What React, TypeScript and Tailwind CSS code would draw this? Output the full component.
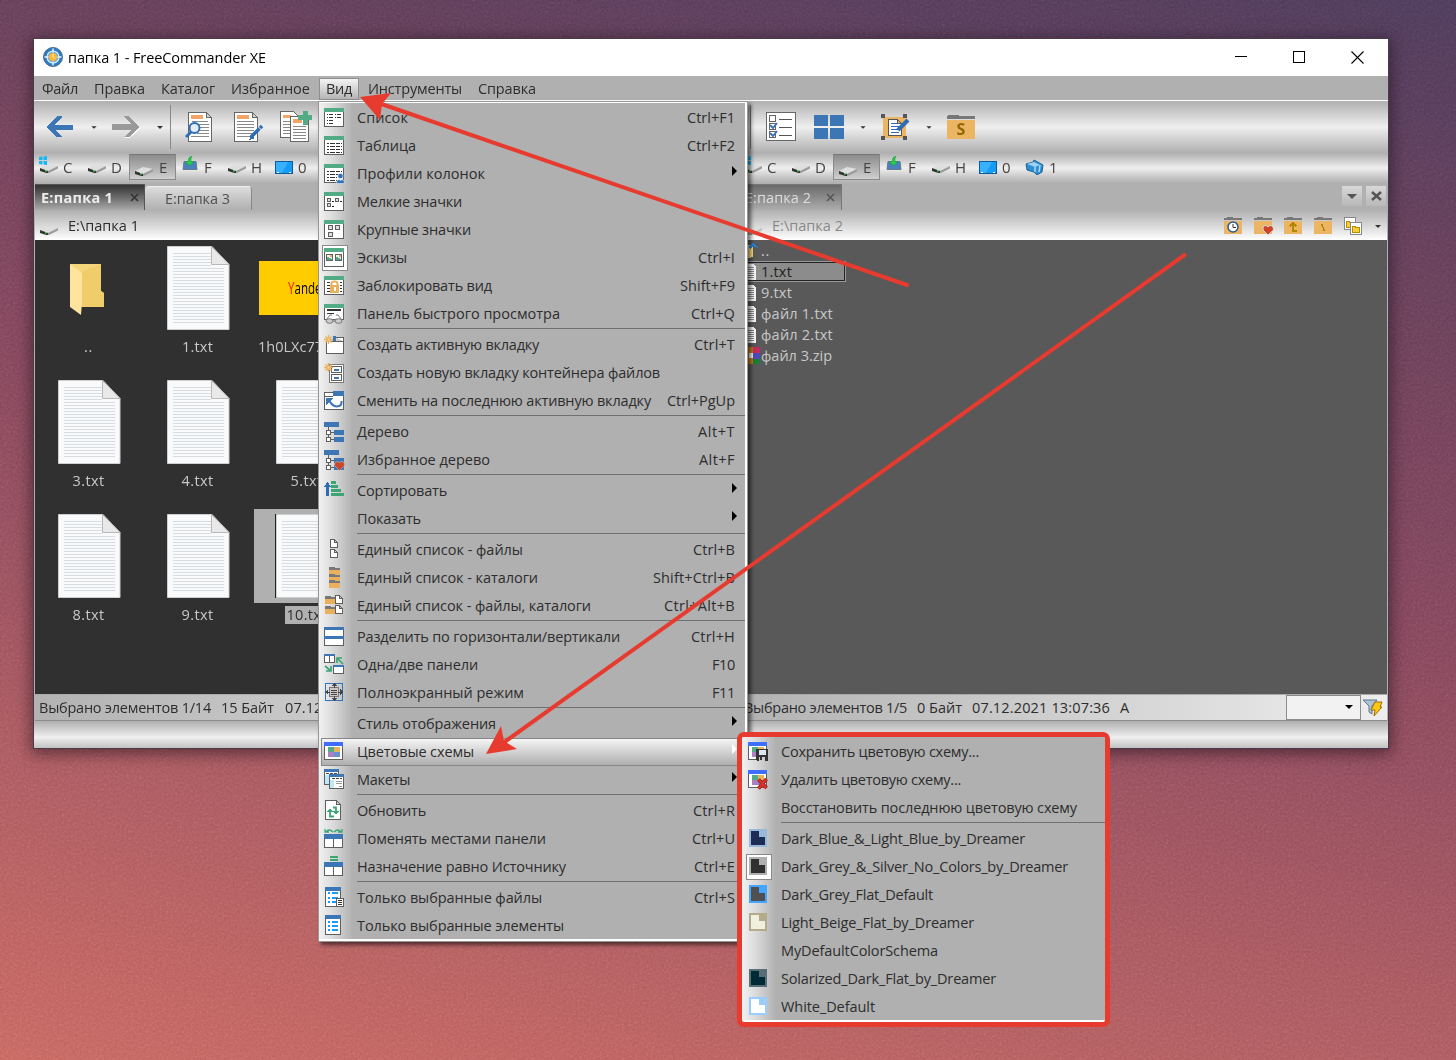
import { useLayoutEffect, useRef, type ReactNode } from 'react'

/* Text spread over a fixed width through letter spacing. */
function Label({ text, w, className = '' }: { text: string; w: number; className?: string }) {
  const ref = useRef<HTMLSpanElement>(null)
  useLayoutEffect(() => {
    const el = ref.current
    if (!el) return
    el.style.letterSpacing = '0px'
    const natural = el.getBoundingClientRect().width
    el.style.letterSpacing = (w - natural) / text.length + 'px'
  }, [text, w])
  return (
    <span ref={ref} className={'inline-block shrink-0 whitespace-pre ' + className}>
      {text}
    </span>
  )
}

function Ico({ w = 20, h = 20, children, className = '', smooth = false }: { w?: number; h?: number; children: ReactNode; className?: string; smooth?: boolean }) {
  return (
    <svg width={w} height={h} viewBox={`0 0 ${w} ${h}`} fill="none" shapeRendering={smooth ? 'auto' : 'crispEdges'} className={'block shrink-0 ' + className}>
      {children}
    </svg>
  )
}

const G = '#52ab85'
const B = '#3c76b5'
const D = '#5f5f5f'
const O = '#e9b15b'

function Frame({ color = G }: { color?: string }) {
  return (
    <>
      <rect x=".5" y=".5" width="19" height="18" fill="#fff" stroke={D} />
      <rect width="20" height="4" fill={color} />
    </>
  )
}

const Lines = ({ x, w, ys, c = '#333' }: { x: number; w: number; ys: number[]; c?: string }) => (
  <>{ys.map((y) => <rect key={y} x={x} y={y} width={w} height="1" fill={c} />)}</>
)

function Star() {
  return (
    <g stroke={O} strokeWidth="1.3" shapeRendering="auto">
      <path d="M4.5 0v9M0 4.5h9M1.5 1.5l6 6M7.5 1.5l-6 6" />
      <circle cx="4.5" cy="4.5" r="1" fill="#f4dfb5" stroke="none" />
    </g>
  )
}

function TreeShape() {
  return (
    <>
      <path d="M0 0h15v5H0zM10 8h10v5H10zM10 15h10v5H10z" fill={B} />
      <path d="M4.5 5v12M6 10.5h4M6 17.5h4" stroke={D} />
      <path d="M2.500 8.500h4v4h-4zM2.500 15.500h4v4h-4z" fill="#fff" stroke={D} />
    </>
  )
}

const Page = ({ x, y }: { x: number; y: number }) => (
  <path transform={`translate(${x} ${y})`} d="M.5.5h4l3 3v5h-7zM4.500.5v3h3" fill="#fff" stroke={D} />
)
const MiniFolder = ({ x, y, w = 10 }: { x: number; y: number; w?: number }) => (
  <g transform={`translate(${x} ${y})`}>
    <path d={`M0 0h5l1 1h${w - 6}v2H0z`} fill="#777" />
    <rect y="3" width={w} height="5" fill={O} />
  </g>
)

function Scheme() {
  return (
    <>
      <rect x=".5" y=".5" width="18" height="17" fill="#fff" stroke={D} />
      <rect width="19" height="4" fill="#3e6dff" />
      <rect x="4" y="5" width="6" height="5" fill="#52ab85" />
      <rect x="10" y="5" width="6" height="5" fill={O} />
      <rect x="4" y="10" width="6" height="5" fill="#ad7fc3" />
      <rect x="10" y="10" width="6" height="5" fill="#6991d1" />
    </>
  )
}

const Panels = () => (
  <>
    <path d="M.5 5.500h18v13H.5zM9.500 9v10" fill="#fff" stroke={D} />
    <rect y="5" width="19" height="5" fill={B} />
  </>
)

const icons: Record<string, ReactNode> = {
  list: (
    <>
      <Frame />
      <path d="M3.500 6v11M11.500 6v5" stroke="#333" strokeDasharray="1 2" />
      <path d="M5 6.500h4M5 9.500h4M5 12.500h4M5 15.500h4M13 6.500h4M13 9.500h4" stroke="#333" />
    </>
  ),
  table: (
    <>
      <Frame />
      <path d="M3 7.500h15M3 10.500h15M3 13.500h15M3 16.500h15" stroke="#333" strokeDasharray="2 1 5 1 4 1 2 5" />
    </>
  ),
  profiles: (
    <>
      <Frame />
      <path d="M3 7.500h15M3 10.500h12M3 13.500h10M3 16.500h10" stroke="#333" strokeDasharray="2 1 5 1 4 1 2 5" />
      <g shapeRendering="auto" fill="#2f70b8" stroke="#fff" strokeWidth=".5">
        <circle cx="16.500" cy="12" r="2.600" />
        <path d="M12.500 19.500q0-4 2.500-4l1.500 1 1.500-1q2.500 0 2.500 4z" />
      </g>
    </>
  ),
  small: (
    <>
      <Frame />
      <path d="M3.500 6.500h3v3h-3zM11.500 6.500h3v3h-3zM3.500 11.500h3v3h-3z" fill="#ddd" stroke={D} />
      <path d="M8 9.500h2M16 9.500h2M8 14.500h2" stroke="#222" />
    </>
  ),
  large: (
    <>
      <Frame />
      <path d="M4.500 5.500h4v4h-4zM11.500 5.500h4v4h-4zM4.500 12.500h4v4h-4z" fill="#ddd" stroke={D} />
    </>
  ),
  thumbs: (
    <>
      <Frame />
      <path d="M2.500 6.500h6v6h-6zM11.500 6.500h6v6h-6z" fill="#eef1ee" stroke={D} />
      <path d="M3 12V9l3 1 2 2zM12 12V9l3 1 2 2z" fill={G} />
      <path d="M6 7h2v2H6zM15 7h2v2h-2z" fill={O} />
    </>
  ),
  lock: (
    <>
      <Frame />
      <path d="M3 6.500h3M3 9.500h3M3 12.500h3M3 15.500h3M16 6.500h2M16 9.500h2M16 12.500h2M16 15.500h2" stroke="#333" />
      <path d="M7.500 10V7.500q0-2 3-2t3 2V10" stroke={O} strokeWidth="2" shapeRendering="auto" />
      <rect x="6" y="9" width="9" height="8" fill={O} />
      <path d="M10.500 11v4" stroke="#fff" strokeWidth="2" />
    </>
  ),
  preview: (
    <>
      <rect x=".5" y=".5" width="19" height="15" fill="#fff" stroke={D} />
      <rect width="20" height="4" fill={G} />
      <path d="M3 5.500h14M3 6.500h14M3 9.500h7" stroke="#333" />
      <g shapeRendering="auto" stroke="#777">
        <path d="M2 16L6 11h2M18 16l-4-5h-2M9 17h2" />
        <ellipse cx="5.500" cy="17" rx="3.500" ry="2.300" fill="#ccc" />
        <ellipse cx="14.500" cy="17" rx="3.500" ry="2.300" fill="#ccc" />
      </g>
    </>
  ),
  newtab: (
    <>
      <path d="M2.500 6.500h17v12h-17zM11.500 2.500h8v4" fill="#fff" stroke={D} />
      <rect x="9" y="1" width="3" height="5" fill={B} />
      <Star />
    </>
  ),
  newcontainer: (
    <>
      <rect x="5.500" y="1.500" width="14" height="18" fill="#fff" stroke="#777" />
      <path d="M7.500 3.500h10v6h-10zM7.500 11.500h10v6h-10z" stroke={D} />
      <path d="M10 7h5M10 15h5" stroke={B} strokeWidth="2" />
      <Star />
    </>
  ),
  lasttab: (
    <>
      <rect x=".5" y="1.500" width="19" height="17" fill="#fff" stroke={D} />
      <rect x="9" width="11" height="5" fill={B} />
      <path d="M0 5.500h9" stroke={D} />
      <path d="M5 9q4 8 10 6 3-1 2.500-5" stroke={B} strokeWidth="2" shapeRendering="auto" />
      <path d="M2 7h8L2 14z" fill={B} />
    </>
  ),
  tree: <TreeShape />,
  favtree: (
    <>
      <TreeShape />
      <path d="M15.500 20.500l-5-5q-.5-3.500 2.500-4 2 0 2.500 1.500.5-1.500 2.500-1.500 3 .5 2.500 4z" fill="#cb4629" stroke="#bbb" strokeWidth=".6" shapeRendering="auto" />
    </>
  ),
  sort: (
    <>
      <path d="M3.500 1L7 6H5v9H2V6H0z" fill="#2e6db4" />
      <path d="M7 0h5v3H7zM7 4h7v3H7zM7 8h10v3H7zM7 12h13v3H7z" fill="#3aa674" />
    </>
  ),
  files: (
    <>
      <Page x={6} y={-1} />
      <Page x={6} y={9} />
    </>
  ),
  dirs: (
    <>
      <MiniFolder x={5} y={-1} w={11} />
      <MiniFolder x={5} y={6} w={11} />
      <MiniFolder x={5} y={12} w={11} />
    </>
  ),
  both: (
    <>
      <MiniFolder x={1} y={0} />
      <MiniFolder x={1} y={10} />
      <Page x={11} y={-1} />
      <Page x={11} y={9} />
    </>
  ),
  split: (
    <>
      <rect x=".5" y=".5" width="19" height="18" fill="#fff" stroke={D} />
      <path d="M0 0h20v3H0zM0 9h20v3H0z" fill={B} />
    </>
  ),
  onetwo: (
    <>
      <path d="M.5-.5h10v8H.5zM5.500 0v8M9.500 11.500h10v7h-10z" fill="#fff" stroke={D} />
      <path d="M0-1h11v2H0zM9 10h11v2H9z" fill={B} />
      <path d="M19 9l-6-6m0 5V3h5M1 11l6 5m0-5v5H2" stroke="#3aa674" strokeWidth="1.700" shapeRendering="auto" />
    </>
  ),
  full: (
    <>
      <rect x="1.500" y=".5" width="17" height="17" stroke="#3572b8" />
      <path d="M5.500 4.500h9v9h-9z" fill="#c9c9c9" stroke="#777" />
      <path d="M7 7.500h6M7 9.500h6M7 11.500h6M10 0v5M10 13v5M1 9h5M14 9h5" stroke="#444" />
      <path d="M7 3h6l-3-3zM7 15h6l-3 3zM4 6v6L1 9zM16 6v6l3-3z" fill="#444" />
    </>
  ),
  scheme: <Scheme />,
  layouts: (
    <>
      <rect x=".5" y=".5" width="14" height="14" fill="#fff" stroke={D} />
      <path d="M1 5h4v9H1z" fill="#bfe6fb" />
      <path d="M5.500 5.500h14v13h-14z" fill="#fff" stroke={D} />
      <path d="M0-1h15v3H0zM5 4h15v3H5z" fill={B} />
      <path d="M6 10h4v8H6z" fill="#bfe6fb" />
      <path d="M2 3.500h11M8 8.500h10" stroke="#444" strokeDasharray="3 1" />
      <path d="M12 11.500h6M12 13.500h6M15 16h3" stroke="#999" />
    </>
  ),
  refresh: (
    <>
      <path d="M1.500-.5h11l4 4v15h-15zM12.500-.5v4h4" fill="#fff" stroke={D} />
      <path d="M6 11v4.500h4M9 6.500h3V11" stroke="#3aa674" strokeWidth="1.800" shapeRendering="auto" />
      <path d="M3 11l3-3.500 3 3.500zM9 10h6l-3 3.500z" fill="#3aa674" />
    </>
  ),
  swap: (
    <>
      <Panels />
      <path d="M1 0v3h4M2 3q3-4 7 0M18 0v3h-4M17 3q-3-4-7 0" stroke="#3aa674" strokeWidth="1.300" shapeRendering="auto" />
    </>
  ),
  equal: (
    <>
      <Panels />
      <path d="M6-1h8v2H6zM6 2h8v2H6z" fill="#3aa674" />
    </>
  ),
  selfiles: (
    <>
      <path d="M1.500.5h15v18h-15z" fill="#fff" stroke={D} />
      <path d="M1-1h16v4H1z" fill={B} />
      <path d="M4 5h2M8 5h6M4 9.500h2M8 9.500h6M4 14h2M8 14h6" stroke="#189bff" strokeWidth="2" />
      <path d="M12.500 10.500h7v8h-7z" fill="#fff" stroke={D} />
      <path d="M14 12.500h4M14 14.500h4M14 16.500h4" stroke="#333" />
    </>
  ),
  selitems: (
    <>
      <path d="M1.500.5h15v18h-15z" fill="#fff" stroke={D} />
      <path d="M1-1h16v4H1z" fill={B} />
      <path d="M4 6h2M8 6h6M4 10h2M8 10h6M4 14h2M8 14h6" stroke="#189bff" strokeWidth="2" />
    </>
  ),
  save: (
    <>
      <Scheme />
      <path d="M8 7h12v12H9l-1-1z" fill="#333" />
      <path d="M11 8h7v5h-7z" fill="#dfe8ee" />
      <path d="M11 15h6v4h-6z" fill="#ccc" />
      <path d="M12 15h2v3h-2z" fill="#333" />
    </>
  ),
  del: (
    <>
      <Scheme />
      <path d="M10.500 9.500l8 8.500M18.500 9l-8 9.500" stroke="#8e1a14" strokeWidth="3.600" shapeRendering="auto" />
      <path d="M10.500 9.500l8 8.500M18.500 9l-8 9.500" stroke="#e02f25" strokeWidth="2.400" shapeRendering="auto" />
    </>
  ),
}

function Swatch({ outer, inner }: { outer: string; inner: string }) {
  return (
    <>
      <rect x="1" width="18" height="18" fill={outer} />
      <path d="M3 2h8v6h6v8H3z" fill={inner} />
    </>
  )
}

type Item = [icon: ReactNode, text: string, w: number, key?: string, kw?: number]
const SEP = null
const ARROW = '>'

const menu: (Item | null)[] = [
  [icons.list, 'Список', 51, 'Ctrl+F1', 48],
  [icons.table, 'Таблица', 59, 'Ctrl+F2', 48],
  [icons.profiles, 'Профили колонок', 128, ARROW],
  [icons.small, 'Мелкие значки', 105],
  [icons.large, 'Крупные значки', 114],
  [icons.thumbs, 'Эскизы', 50, 'Ctrl+I', 37],
  [icons.lock, 'Заблокировать вид', 135, 'Shift+F9', 55],
  [icons.preview, 'Панель быстрого просмотра', 203, 'Ctrl+Q', 44],
  SEP,
  [icons.newtab, 'Создать активную вкладку', 182, 'Ctrl+T', 41],
  [icons.newcontainer, 'Создать новую вкладку контейнера файлов', 303],
  [icons.lasttab, 'Сменить на последнюю активную вкладку', 294, 'Ctrl+PgUp', 68],
  SEP,
  [icons.tree, 'Дерево', 52, 'Alt+T', 37],
  [icons.favtree, 'Избранное дерево', 133, 'Alt+F', 36],
  SEP,
  [icons.sort, 'Сортировать', 90, ARROW],
  [null, 'Показать', 64, ARROW],
  SEP,
  [icons.files, 'Единый список - файлы', 166, 'Ctrl+B', 42],
  [icons.dirs, 'Единый список - каталоги', 181, 'Shift+Ctrl+B', 82],
  [icons.both, 'Единый список - файлы, каталоги', 234, 'Ctrl+Alt+B', 71],
  SEP,
  [icons.split, 'Разделить по горизонтали/вертикали', 263, 'Ctrl+H', 44],
  [icons.onetwo, 'Одна/две панели', 121, 'F10', 23],
  [icons.full, 'Полноэкранный режим', 167, 'F11', 23],
  SEP,
  [null, 'Стиль отображения', 139, ARROW],
  [icons.scheme, 'Цветовые схемы', 117, ARROW],
  [icons.layouts, 'Макеты', 53, ARROW],
  SEP,
  [icons.refresh, 'Обновить', 69, 'Ctrl+R', 42],
  [icons.swap, 'Поменять местами панели', 189, 'Ctrl+U', 43],
  [icons.equal, 'Назначение равно Источнику', 209, 'Ctrl+E', 41],
  SEP,
  [icons.selfiles, 'Только выбранные файлы', 185, 'Ctrl+S', 41],
  [icons.selitems, 'Только выбранные элементы', 207],
]

const submenu: (Item | null)[] = [
  [icons.save, 'Сохранить цветовую схему...', 198],
  [icons.del, 'Удалить цветовую схему...', 180],
  [null, 'Восстановить последнюю цветовую схему', 296],
  SEP,
  [<Swatch outer="#9ab8d9" inner="#1d2c56" />, 'Dark_Blue_&_Light_Blue_by_Dreamer', 244],
  [<Swatch outer="#b0b0b0" inner="#303030" />, 'Dark_Grey_&_Silver_No_Colors_by_Dreamer', 287],
  [<Swatch outer="#43a5ff" inner="#505050" />, 'Dark_Grey_Flat_Default', 152],
  [<Swatch outer="#b3ab8b" inner="#f0f0dc" />, 'Light_Beige_Flat_by_Dreamer', 193],
  [null, 'MyDefaultColorSchema', 157],
  [<Swatch outer="#586e75" inner="#002b36" />, 'Solarized_Dark_Flat_by_Dreamer', 215],
  [<Swatch outer="#99ccff" inner="#ffffff" />, 'White_Default', 94],
]

function MenuRows({ items, checked, active }: { items: (Item | null)[]; checked: string; active?: string }) {
  return (
    <>
      {items.map((it, i) => {
        if (!it) return <div key={i} className="ml-[36px] h-[3px] border-t border-[#707070]" />
        const [icon, text, w, key, kw] = it
        const on = text === active
        return (
          <div key={i} className={'flex h-7 items-center ' + (on ? 'bg-linear-to-b from-[#f8f8f8] to-[#acacac] outline outline-offset-[-1px] outline-[#878787]' : '')}>
            <span className={'ml-px flex size-[26px] shrink-0 items-center justify-center ' + (text === checked ? 'border border-[#8a8a8a] bg-white' : '')}>
              <Ico className="mr-0.5 overflow-visible">{icon}</Ico>
            </span>
            <Label text={text} w={w} className="ml-[9px]" />
            {key === ARROW ? (
              <span className={'mr-2 -mt-1.5 ml-auto h-0 w-0 border-y-[5px] border-l-[5px] border-y-transparent ' + (on ? 'border-l-white' : 'border-l-black')} />
            ) : key ? (
              <Label text={key} w={kw ?? 40} className="mr-2.5 ml-auto" />
            ) : null}
          </div>
        )
      })}
    </>
  )
}

const Drive = ({ faded = false, win = false }: { faded?: boolean; win?: boolean }) => (
  <Ico w={20} h={17} smooth className={faded ? 'opacity-50' : ''}>
    <path d="M1 12l8-4 10 2-10 5z" fill="#dedede" />
    <path d="M1 12l8 3v2.500l-8-2.500z" fill="#333" />
    <path d="M9 15l10-5v2.500L9 17.500z" fill="#9c9c9c" />
    <rect x="6" y="14" width="2" height="1.500" fill="#46d651" />
    {win && <path d="M0 1l3.500-.5V4H0zM4.500 .4L8 0v4H4.500zM0 5h3.500v3.500L0 8zM4.500 5H8v4l-3.500-.4z" fill="#18b6f5" />}
  </Ico>
)

const UsbDrive = () => (
  <Ico w={16} h={16} smooth>
    <path d="M2 5.500h12l1 8H1z" fill="#4c7fc0" stroke="#6c7787" />
    <path d="M10 0Q6 1 6 5.500H3.500l4 4.500L12 5.500H9Q8.500 2 10 0z" fill="#28cc4a" stroke="#17983a" strokeWidth=".5" />
  </Ico>
)

const Monitor = () => (
  <Ico w={18} h={13}>
    <rect x=".5" y=".5" width="17" height="12" fill="#179cf5" stroke="#0a5aa0" />
    <path d="M1 1h12L7 12H1z" fill="#37b0ff" />
    <path d="M2 11.500h2M14 11.500h2" stroke="#fff" />
  </Ico>
)

function Drives({ extra = false }: { extra?: boolean }) {
  return (
    <div className="flex h-full items-center pb-0.5 text-[15px] text-[#46423e]">
      <span className="flex w-[47px] gap-1 pl-[3px]"><Drive win /><Label text="C" w={10} /></span>
      <span className="flex w-[46px] gap-1 pl-1"><Drive /><Label text="D" w={11} /></span>
      <span className="flex h-[26px] w-[47px] items-center gap-[5px] border border-[#8a8a8a] border-t-[#777] bg-linear-to-b from-[#8c8c8c] to-[#d0d0d0] pl-1"><Drive /><Label text="E" w={9} /></span>
      <span className="flex w-[48px] gap-1.5 pl-1.5"><UsbDrive /><Label text="F" w={8} /></span>
      <span className="flex w-[50px] gap-1 pl-[3px]"><Drive /><Label text="H" w={11} /></span>
      <span className="flex w-[47px] items-center gap-[5px] pl-px"><Monitor /><Label text="0" w={9} /></span>
      {extra && (
        <span className="flex items-center gap-1">
          <Ico w={20} h={16} smooth>
            <path d="M1 5l7-2 1-2 9 5-1 7-5 3-3-3-7-2z" fill="#2f8ed0" stroke="#1c6498" />
            <path d="M2 5l7-2 6 3-5 2z" fill="#9bd3f4" />
            <path d="M10 8v5M15 6l-1 7" stroke="#a8dcf8" strokeWidth="1.500" />
          </Ico>
          <Label text="1" w={8} />
        </span>
      )}
    </div>
  )
}

const TextPage = () => (
  <svg width="63" height="84" viewBox="0 0 63 84" className="ml-0.5 block">
    <path d="M.5.5H45l17 18v65H.5z" fill="#f9fafb" stroke="#cfcfcf" />
    {Array.from({ length: 24 }, (_, i) => (
      <path key={i} d={`M6 ${7.5 + i * 3}h${i < 5 ? 38 : 51}`} stroke="#d9dcde" shapeRendering="crispEdges" />
    ))}
    <path d="M44.500.5l17.500 18H44.500z" fill="#e9e9ea" stroke="#b9b9b9" />
  </svg>
)

function Thumb({ name, w, children, selected = false }: { name: string; w: number; children: ReactNode; selected?: boolean }) {
  return (
    <div className="flex h-[134px] w-[109px] shrink-0 flex-col items-center">
      <div className={'flex h-[94px] w-[105px] items-center justify-center ' + (selected ? 'bg-[#b0b0b0]' : '')}>{children}</div>
      <span className={'mt-[3px] flex h-[18px] items-center px-0.5 ' + (selected ? 'bg-[#b0b0b0] text-[#303030]' : '')}>
        <Label text={name} w={w} />
      </span>
    </div>
  )
}

const Caret = ({ className = '' }: { className?: string }) => (
  <span className={'block h-0 w-0 shrink-0 border-x-[3px] border-t-[3px] border-x-transparent border-t-[#333] ' + className} />
)

const Folder = ({ children }: { children?: ReactNode }) => (
  <Ico w={20} h={18}>
    <path d="M0 3V1h2l1-1h5l1 1h9v2z" fill="#777" />
    <rect y="4" width="18" height="13" fill="#ebb564" />
    {children}
  </Ico>
)

const Bar = 'bg-linear-to-b from-[#b0b0b0] via-[#efefef] to-[#b0b0b0]'

export default function App() {
  return (
    <div className="relative h-[1060px] w-[1456px] overflow-hidden bg-[linear-gradient(191deg,#4b3a58_0%,#643e56_22%,#7f4559_48%,#a9585d_78%,#c6645e_100%)] font-['Open_Sans','Noto_Sans',sans-serif] text-[14.500px] text-[#2d2d2d]">
      <svg className="absolute inset-0 h-full w-full opacity-40 mix-blend-overlay">
        <filter id="grain">
          <feTurbulence type="fractalNoise" baseFrequency=".45" numOctaves="2" />
          <feColorMatrix type="saturate" values="0" />
        </filter>
        <rect width="1456" height="1060" filter="url(#grain)" />
      </svg>

      <main className="relative mt-[39px] ml-[34px] flex h-[709px] w-[1354px] flex-col bg-[#b0b0b0] shadow-[0_3px_14px_3px_rgba(20,8,20,.5)] outline outline-[#4b3a48]">
        <header className="flex h-[37px] shrink-0 items-center bg-white pr-[25px] pb-px pl-[9px] text-black">
          <Ico w={20} h={20} smooth>
            <circle cx="10" cy="10" r="9.500" fill="#2c7cc7" stroke="#4a6c8b" />
            <circle cx="10" cy="10" r="6" fill="#6eaada" stroke="#d9edf9" strokeWidth="1.200" />
            <path d="M10 1.500v4M10 14.500v4M1.500 10h4M14.500 10h4" stroke="#e7f5ff" strokeWidth="1.500" />
            <circle cx="10" cy="10" r="4" fill="#ffb633" />
            <path d="M10 7v3l2 1.500" stroke="#fff2c5" />
          </Ico>
          <Label text="папка 1 - FreeCommander XE" w={198} className="ml-[5px] pt-px" />
          <div className="ml-auto flex items-center gap-[46px]">
            <Ico w={12} h={12}><path d="M0 5.500h12" stroke="#000" /></Ico>
            <Ico w={12} h={12}><path d="M.5.5h11v11H.5z" stroke="#000" /></Ico>
            <Ico w={13} h={13} smooth className="-mr-px"><path d="M.5.5l12 12M12.500.5l-12 12" stroke="#000" strokeWidth="1.100" /></Ico>
          </div>
        </header>

        <nav className="flex h-[25px] shrink-0 items-center gap-4 border-b border-white pt-0.5 pl-2">
          <Label text="Файл" w={36} />
          <Label text="Правка" w={51} />
          <Label text="Каталог" w={54} />
          <Label text="Избранное" w={79} />
          <span className="-mx-[7px] flex h-[22px] items-center border border-[#8f8f8f] bg-linear-to-b from-[#f4f4f4] to-[#b4b4b4] px-1.5">
            <Label text="Вид" w={26} />
          </span>
          <Label text="Инструменты" w={94} />
          <Label text="Справка" w={58} />
        </nav>

        <div className={'flex h-[52px] shrink-0 items-center ' + Bar}>
          <Ico w={28} h={22} className="ml-3"><path d="M0 11L11 0h5v1L9 9h18v5H9l7 6v1h-5z" fill={B} /></Ico>
          <Caret className="ml-[17px] scale-90" />
          <Ico w={28} h={22} className="ml-[15px]"><path d="M28 12L18 21h-5" stroke="#fff" /><path d="M27 11L17 0h-5v1l7 7H0v6h19l-7 7h5z" fill="#999" /></Ico>
          <Caret className="ml-[17px]" />
          <span className="ml-[7px] h-11 w-px bg-[#888]" />
          <Ico w={28} h={32} className="ml-[14px]">
            <path d="M3.500 1.500h18l5 5v24h-23zM21.500 1.500v5h5" fill="#fff" stroke="#666" />
            <rect x="6" y="4" width="12" height="4" fill="#f3a468" />
            <path d="M7 10.500h16M14 13.500h10M15 16.500h9M14 19.500h10M12 22.500h12M6 25.500h18" stroke="#888" />
            <g shapeRendering="auto" stroke="#2e6db4"><circle cx="9.500" cy="17" r="5" fill="#e5eef7" strokeWidth="2" /><path d="M6 21l-5 5" strokeWidth="3" /></g>
          </Ico>
          <Ico w={30} h={32} className="ml-[21px]">
            <path d="M.5 1.500h18l5 5v24H.5zM18.500 1.500v5h5" fill="#fff" stroke="#666" />
            <rect x="3" y="4" width="12" height="4" fill="#f3a468" />
            <Lines x={3} w={17} ys={[10, 13, 16, 19, 22, 25]} c="#888" />
            <path d="M15 29l2-5 4 3z" fill="#2e6db4" />
            <path d="M17 26l11-11" stroke="#2e6db4" strokeWidth="3.500" shapeRendering="auto" />
            <path d="M24.500 16l3 3" stroke="#fff" shapeRendering="auto" />
          </Ico>
          <Ico w={33} h={32} className="ml-4">
            <path d="M.5.5h13l5 5v21H.5z" fill="#fff" stroke="#666" />
            <rect x="3" y="4" width="8" height="3" fill="#f3a468" />
            <Lines x={3} w={7} ys={[10, 13, 16, 19, 22]} c="#888" />
            <path d="M10.500 5.500h18v25h-18z" fill="#fff" stroke="#666" />
            <rect x="13" y="8" width="9" height="4" fill="#f3a468" />
            <Lines x={13} w={13} ys={[15, 18, 21, 24, 27]} c="#888" />
            <path d="M25-.5v14M18 6.500h14" stroke={G} strokeWidth="5" />
          </Ico>

          <span className="ml-[437px] h-11 w-px bg-[#777]" />
          <Ico w={31} h={30} className="ml-[15px]">
            <rect x=".5" y=".5" width="29" height="28" fill="#fff" stroke="#666" />
            <path d="M3.500 3.500h6v6h-6zM3.500 11.500h6v6h-6zM3.500 19.500h6v6h-6z" stroke="#666" />
            <path d="M13 7.500h13M13 15.500h13M13 23.500h13" stroke="#555" />
            <path d="M4 13l3 3 4-5M4 21l3 3 4-5" stroke={B} strokeWidth="2" shapeRendering="auto" />
          </Ico>
          <Ico w={30} h={24} className="ml-[17px]"><path d="M0 0h14v11H0zM16 0h14v11H16zM0 13h14v11H0zM16 13h14v11H16z" fill={B} /></Ico>
          <Caret className="ml-4 scale-90" />
          <Ico w={30} h={27} className="ml-[15px]">
            <rect x="2" y="3" width="23" height="21" fill="#ebb564" />
            <path d="M7.500 5.500h9l4 4v12h-13zM16.500 5.500v4h4" fill="#fff" stroke="#555" />
            <Lines x={10} w={8} ys={[9, 12, 15, 18]} c="#2e6db4" />
            <path d="M0 0h4v4H0zM22 0h4v4h-4zM0 22h4v4H0zM22 22h4v4h-4z" fill="#555" />
            <path d="M17 16l10-10" stroke="#2e6db4" strokeWidth="4" shapeRendering="auto" />
          </Ico>
          <Caret className="ml-[15px] scale-90" />
          <div className="relative ml-[15px]">
            <Ico w={28} h={24}>
              <path d="M0 4V1l2-1h9l2 1h15v3z" fill="#777" /><rect y="5" width="28" height="19" fill="#ebb564" />
            </Ico>
            <span className="absolute inset-x-0 top-[5px] text-center text-[16px]/[19px] font-bold text-[#8f6900]">S</span>
          </div>
        </div>

        <div className={'flex h-[30px] shrink-0 ' + Bar}>
          <div className="w-[706px] pl-0.5"><Drives /></div>
          <Drives extra />
        </div>

        <div className="flex min-h-0 flex-1 px-px">
          <section className="flex w-[704px] shrink-0 flex-col">
            <div className="flex h-[27px] shrink-0 items-end">
              <div className="flex h-[26px] w-[110px] items-center border-t border-r border-[#555] bg-linear-to-b from-[#343434] to-[#aaa] pl-1.5 font-bold text-[#ececec]">
                <Label text="E:папка 1" w={72} />
                <Ico w={9} h={9} smooth className="ml-[17px]"><path d="M1 1l7 7M8 1L1 8" stroke="#333" strokeWidth="1.600" /></Ico>
              </div>
              <div className="flex h-[24px] w-[107px] items-center rounded-t-sm border-t border-r border-t-[#eee] border-r-[#888] bg-linear-to-b from-[#dcdcdc] to-[#b0b0b0] pl-[20px] text-[#505050]">
                <Label text="E:папка 3" w={65} />
              </div>
            </div>
            <div className="flex h-[30px] shrink-0 items-center bg-linear-to-b from-[#b0b0b0] to-white pt-0.5 pl-1">
              <Drive /><Label text="E:\папка 1" w={71} className="ml-[9px]" />
            </div>
            <div className="h-[454px] shrink-0 overflow-hidden bg-[#303030] text-[#c8c8c8]">
              <div className="-ml-px">
                <div className="flex pt-px">
                  <Thumb name=".." w={9}>
                    <svg width="36" height="53" viewBox="0 0 36 53" className="mt-[3px] mr-0.5 block">
                      <path d="M0 1h31v27l3 2v14H10z" fill="#f5d57c" /><path d="M11 9L31 1v27l3 2v14H11z" fill="#f0cd6b" />
                      <path d="M0 1l12 9v29l-1 13L0 44z" fill="#ffe49d" />
                    </svg>
                  </Thumb>
                  <Thumb name="1.txt" w={31}><TextPage /></Thumb>
                  <div className="flex h-[134px] w-[109px] flex-col pl-[7px]">
                    <div className="mt-5 flex h-[54px] w-[100px] items-center bg-[#ffcc00] pl-[29px] text-[17px] font-medium text-black">
                      <span className="inline-block origin-left scale-x-[.68] first-letter:text-[#f02010]">Yandex</span>
                    </div>
                    <Label text="1h0LXc77" w={65} className="mt-[22px] -ml-px self-start leading-5" />
                  </div>
                </div>
                <div className="flex">
                  <Thumb name="3.txt" w={32}><TextPage /></Thumb>
                  <Thumb name="4.txt" w={32}><TextPage /></Thumb>
                  <Thumb name="5.txt" w={32}><TextPage /></Thumb>
                </div>
                <div className="flex">
                  <Thumb name="8.txt" w={32}><TextPage /></Thumb>
                  <Thumb name="9.txt" w={32}><TextPage /></Thumb>
                  <Thumb name="10.txt" w={40} selected><span className="-mr-px border-l border-[#222] bg-[#222] [&>svg]:ml-0"><TextPage /></span></Thumb>
                </div>
              </div>
            </div>
            <div className="flex h-[27px] shrink-0 items-center gap-2.5 border-y border-t-[#aaa] border-b-[#8c8c8c] bg-linear-to-r from-[#b2b2b2] to-[#eee] pl-1">
              <Label text="Выбрано элементов 1/14" w={172} />
              <Label text="15 Байт" w={53} />
              <Label text="07.12.2021" w={75} className="ml-px" />
            </div>
          </section>

          <section className="flex min-w-0 flex-1 flex-col">
            <div className="flex h-[27px] shrink-0 items-end">
              <div className="flex h-[26px] w-[103px] items-center border-t border-r border-[#777] bg-linear-to-b from-[#6a6a6a] to-[#adadad] pl-1.5 text-[#ddd]">
                <Label text="E:папка 2" w={66} />
                <Ico w={9} h={9} smooth className="ml-[15px]"><path d="M1 1l7 7M8 1L1 8" stroke="#555" strokeWidth="1.500" /></Ico>
              </div>
              <div className="mr-px mb-1 ml-auto flex gap-1">
                <span className="flex size-5 items-center justify-center bg-linear-to-b from-[#d8d8d8] to-[#b8b8b8]"><span className="h-0 w-0 border-x-[5px] border-t-[5px] border-x-transparent border-t-[#555]" /></span>
                <span className="flex size-5 items-center justify-center bg-linear-to-b from-[#d8d8d8] to-[#b8b8b8]"><Ico w={11} h={10} smooth><path d="M1 1l9 8M10 1L1 9" stroke="#555" strokeWidth="2.500" /></Ico></span>
              </div>
            </div>
            <div className="flex h-[30px] shrink-0 items-center bg-linear-to-b from-[#b0b0b0] to-white pt-0.5 pr-1.5 pl-1 text-[#888]">
              <Drive faded /><Label text="E:\папка 2" w={71} className="ml-[9px]" />
              <div className="ml-auto flex items-center gap-2.5">
                <Folder><g shapeRendering="auto"><circle cx="9" cy="10" r="5" fill="#fff" stroke="#2d5a96" strokeWidth="1.500" /><path d="M9 7v3.500h3" stroke="#333" /></g></Folder>
                <Folder><path d="M14 18l-5-5q-1-4 2-4.500 2 0 3 1.500 1-1.500 3-1.500 3 .5 2.500 4.500z" fill="#cd4428" stroke="#ddd" shapeRendering="auto" /></Folder>
                <Folder><path d="M9 7v7h4M5.500 9.500L9 6l3.500 3.500" stroke="#b58500" strokeWidth="1.700" /></Folder>
                <Folder><path d="M7.500 7l3 7" stroke="#b58500" strokeWidth="1.500" /></Folder>
                <Ico w={19} h={18}>
                  <path d="M.5.5h11v12H.5z" fill="#fff" stroke="#888" />
                  <path d="M2.500 4h3v1h3v5h-6z" fill="#f3cf3a" stroke="#bb8c00" />
                  <path d="M6.500 5.500h11v12h-11z" fill="#fff" stroke="#888" />
                  <path d="M8.500 9h3v1h4v5h-7z" fill="#f3cf3a" stroke="#bb8c00" />
                </Ico>
                <Caret className="mt-px ml-0.5" />
              </div>
            </div>
            <div className="h-[454px] shrink-0 bg-[#595959] text-[#c8c8c8]">
              {[['..', 9], ['1.txt', 31], ['9.txt', 31], ['файл 1.txt', 72], ['файл 2.txt', 72], ['файл 3.zip', 71]].map(([name, w], i) => (
                <div key={name} className={'flex h-[21px] items-center pl-[3px] ' + (i === 1 ? 'w-[107px] border border-[#999] bg-[#8c8c8c] text-[#222] outline outline-offset-[-2px] outline-[#222]' : '')}>
                  <Ico w={18} h={18} className={i === 1 ? '-ml-px' : ''}>
                    {i === 0 ? (
                      <><path d="M1 3h10v12l-10 2z" fill="#ffdd7e" /><path d="M6 5l5-5 5 6-3-1-2-1-2 3z" fill="#2583db" /></>
                    ) : i === 5 ? (
                      <><path d="M1 0h17v6H1z" fill="#c12a5c" /><path d="M1 6h17v6H1z" fill="#4d4bb3" /><path d="M1 12h17v5H1z" fill="#177d37" /><path d="M5 0h6v17H5z" fill="#c27b17" /><rect x="7" y="6" width="4" height="5" fill="#eee" /></>
                    ) : (
                      <><path d="M1 1h10l3 3v13H1z" fill="#f4f4f4" /><Lines x={3} w={9} ys={[4, 6, 8, 10, 12, 14]} c="#888" /></>
                    )}
                  </Ico>
                  <Label text={String(name)} w={Number(w)} className="ml-px" />
                </div>
              ))}
            </div>
            <div className="flex h-[27px] shrink-0 items-center gap-2.5 border-y border-t-[#aaa] border-b-[#8c8c8c] bg-linear-to-r from-[#b2b2b2] to-[#eee] pl-[5px]">
              <Label text="Выбрано элементов 1/5" w={163} />
              <Label text="0 Байт" w={45} />
              <Label text="07.12.2021 13:07:36" w={138} />
              <Label text="A" w={9} />
              <span className="ml-auto flex h-[25px] w-[75px] items-center justify-end border border-[#8c8c8c] bg-[#f2f2f2] pr-[7px]">
                <span className="-mt-0.5 h-0 w-0 border-x-[4px] border-t-[4px] border-x-transparent border-t-black" />
              </span>
              <Ico w={22} h={20} smooth className="-ml-[9px] mr-[3px]">
                <path d="M1 2h14l-5 6v8l-3-2V8z" fill="#afc3d7" stroke="#60758d" />
                <path d="M13 4h7l-2 5h2l-8 9 1-6h-4z" fill="#ffc817" stroke="#a06b00" />
              </Ico>
            </div>
          </section>
        </div>
        <footer className="h-[27px] shrink-0 bg-linear-to-b from-[#b0b0b0] via-[#efefef] via-60% to-[#c2c2c2]" />
      </main>

      <div className="absolute top-[101px] left-[318px] h-[841px] w-[430px] border border-[#969696] bg-white shadow-[3px_3px_4px_rgba(0,0,0,.55)]">
        <div className="mt-px h-[836px] w-[426px] bg-[linear-gradient(90deg,#f1f1f1_0,#dadada_14px,#b0b0b0_34px)] pt-px pl-0.5">
          <MenuRows items={menu} checked="Эскизы" active="Цветовые схемы" />
        </div>
      </div>

      <div className="absolute top-[732px] left-[737px] h-[295px] w-[373px] overflow-hidden rounded-[7px] border-[5px] border-[#e63b2e] bg-white">
        <div className="h-[283px] bg-[linear-gradient(90deg,#f1f1f1_0,#dadada_14px,#b0b0b0_34px)] pt-px pl-[3px]">
          <MenuRows items={submenu} checked="Dark_Grey_&_Silver_No_Colors_by_Dreamer" />
        </div>
      </div>

      <svg className="pointer-events-none absolute inset-0" width="1456" height="1060" viewBox="0 0 1456 1060">
        <g stroke="#e63b2e" strokeWidth="4" strokeLinecap="round">
          <path d="M907 285L380 103.500M1184.500 255L503 743" />
        </g>
        <path d="M360 97l31-4-9 11-2 16zM486 754l15-28 3 15 13 8z" fill="#e63b2e" />
      </svg>
    </div>
  )
}
